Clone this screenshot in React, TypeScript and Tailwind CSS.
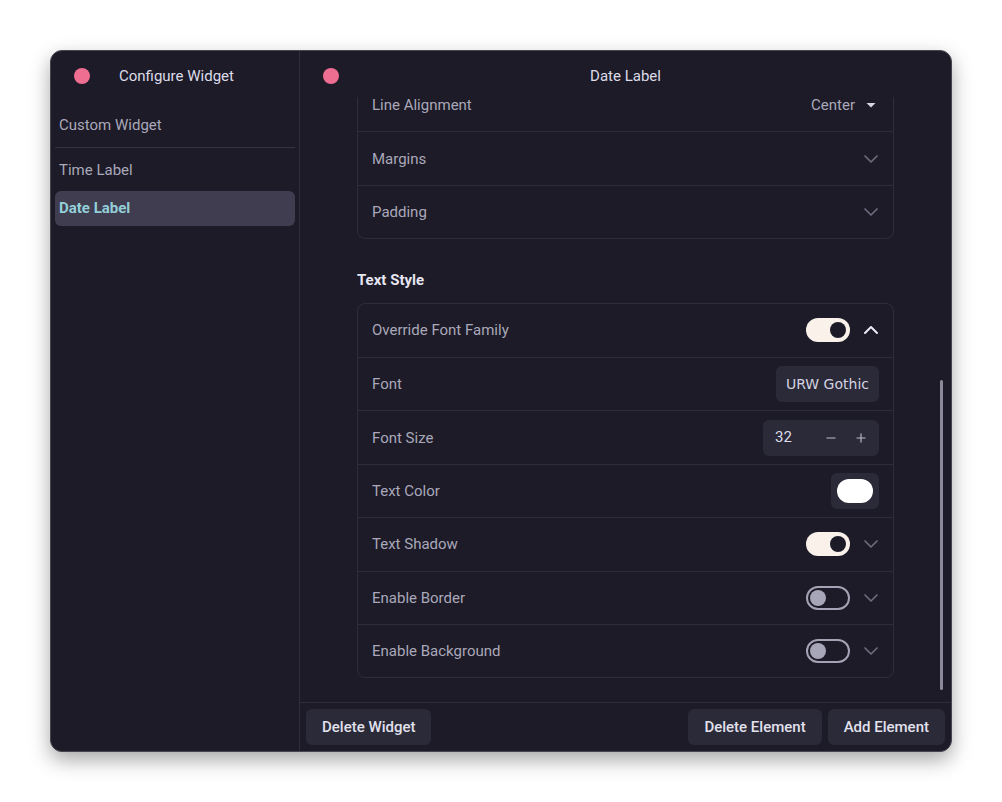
import { ChevronDown, ChevronUp, Minus, Plus } from "lucide-react";

const ui = "font-['Roboto','Liberation_Sans',sans-serif]";

function Dot() {
  return <span className="block h-4 w-4 shrink-0 rounded-full bg-[#ee6e92]" />;
}

function Toggle({ on }: { on: boolean }) {
  if (on) {
    return (
      <span className="flex h-6 w-11 items-center justify-end rounded-full bg-[#f9f1ea] px-1">
        <span className="h-4 w-4 rounded-full bg-[#1b1a26]" />
      </span>
    );
  }
  return (
    <span className="flex h-6 w-11 items-center rounded-full border-2 border-[#a4a2b4] px-[2px]">
      <span className="h-4 w-4 rounded-full bg-[#a7a5b8]" />
    </span>
  );
}

function Row({
  label,
  first,
  tight,
  children,
}: {
  label: string;
  first?: boolean;
  tight?: boolean;
  children?: React.ReactNode;
}) {
  return (
    <div
      className={`flex h-[53.4px] items-center justify-between px-[14px] ${first ? "" : "border-t border-[#2e2c3a]"}`}
    >
      <span className="pt-px text-[15px] leading-none text-[#aaa8ba]">{label}</span>
      <div className={`flex items-center ${tight ? "gap-1" : "gap-[9px]"}`}>{children}</div>
    </div>
  );
}

const Chev = () => (
  <ChevronDown size={24} strokeWidth={1.75} className="-mr-[4px] text-[#6c6a7d]" />
);

export default function App() {
  return (
    <div className={`flex min-h-screen justify-center bg-white pt-[50px] ${ui}`}>
      <div className="flex h-[702px] w-[902px] overflow-hidden rounded-[12px] border border-[#47454f] bg-[#1c1b27] shadow-[0_8px_20px_rgba(0,0,0,0.35)]">
        {/* Sidebar */}
        <aside className="flex w-[249px] shrink-0 flex-col border-r border-[#2f2d3b]">
          <div className="flex h-[50px] items-center gap-[29px] pl-[23px]">
            <Dot />
            <span className="text-[15px] text-[#dddcea]">Configure Widget</span>
          </div>
          <nav className="flex flex-col px-1 pt-[7px]">
            <div className="flex h-[35px] items-center px-1 text-[15px] text-[#aaa8ba]">
              Custom Widget
            </div>
            <div className="mb-[5px] mt-[4px] h-px bg-[#35333f]" />
            <div className="flex h-[35px] items-center px-1 text-[15px] text-[#aaa8ba]">
              Time Label
            </div>
            <div className="mt-[3px] flex h-[35px] items-center rounded-[6px] bg-[#403d51] px-1 text-[15px] font-bold text-[#93cfd8]">
              Date Label
            </div>
          </nav>
        </aside>

        {/* Main */}
        <main className="flex min-w-0 flex-1 flex-col">
          <div className="relative flex h-[46px] shrink-0 items-center justify-center pt-[4px]">
            <span className="absolute left-[23px] top-[17px]">
              <Dot />
            </span>
            <span className="text-[15px] text-[#dddcea]">Date Label</span>
          </div>

          <div className="relative min-h-0 flex-1 overflow-hidden">
            <div className="mx-auto mt-[-20px] w-[537px]">
              <div className="overflow-hidden rounded-[8px] border border-[#2f2d3b]">
                <Row label="Line Alignment" first tight>
                  <span className="pt-px text-[15px] leading-none text-[#aaa8ba]">Center</span>
                  <svg width="24" height="16" viewBox="0 0 24 16" className="-mr-[4px]">
                    <path d="M7.5 6h9L12 10.5z" fill="#d6d4e4" />
                  </svg>
                </Row>
                <Row label="Margins">
                  <Chev />
                </Row>
                <Row label="Padding">
                  <Chev />
                </Row>
              </div>

              <h2 className="mb-[11px] mt-[30px] text-[15px] font-bold text-[#e6e5f1]">
                Text Style
              </h2>

              <div className="overflow-hidden rounded-[8px] border border-[#2f2d3b]">
                <Row label="Override Font Family" first>
                  <Toggle on />
                  <ChevronUp size={24} strokeWidth={2} className="-mr-[4px] text-[#eceaf5]" />
                </Row>
                <Row label="Font">
                  <span className="flex h-9 items-center rounded-[6px] bg-[#2b2a38] px-[10px] font-['URW_Gothic','DejaVu_Sans',sans-serif] text-[14px] text-[#d4d2e0]">
                    URW Gothic
                  </span>
                </Row>
                <Row label="Font Size">
                  <span className="flex h-9 w-[116px] items-center rounded-[6px] bg-[#2b2a38] pl-3 pr-[11px] text-[15px] text-[#dddcea]">
                    <span className="flex-1">32</span>
                    <Minus size={14} strokeWidth={2} className="mr-4 text-[#bdbbcc]" />
                    <Plus size={14} strokeWidth={2} className="text-[#bdbbcc]" />
                  </span>
                </Row>
                <Row label="Text Color">
                  <span className="flex h-9 w-12 items-center justify-center rounded-[6px] bg-[#2b2a38]">
                    <span className="h-6 w-9 rounded-full bg-white" />
                  </span>
                </Row>
                <Row label="Text Shadow">
                  <Toggle on />
                  <Chev />
                </Row>
                <Row label="Enable Border">
                  <Toggle on={false} />
                  <Chev />
                </Row>
                <Row label="Enable Background">
                  <Toggle on={false} />
                  <Chev />
                </Row>
              </div>
            </div>

            <div className="absolute bottom-[12px] right-[8px] top-[283px] w-[3px] rounded-full bg-[#8c8a9a]" />
          </div>

          <footer className="flex h-[49px] shrink-0 items-center justify-between border-t border-[#2f2d3b] px-[6px]">
            <button className="h-9 rounded-[6px] bg-[#2b2a38] px-4 text-[15px] font-medium text-[#e2e1ee]">
              Delete Widget
            </button>
            <div className="flex gap-[6px]">
              <button className="h-9 rounded-[6px] bg-[#2b2a38] px-4 text-[15px] font-medium text-[#e2e1ee]">
                Delete Element
              </button>
              <button className="h-9 rounded-[6px] bg-[#2b2a38] px-4 text-[15px] font-medium text-[#e2e1ee]">
                Add Element
              </button>
            </div>
          </footer>
        </main>
      </div>
    </div>
  );
}
